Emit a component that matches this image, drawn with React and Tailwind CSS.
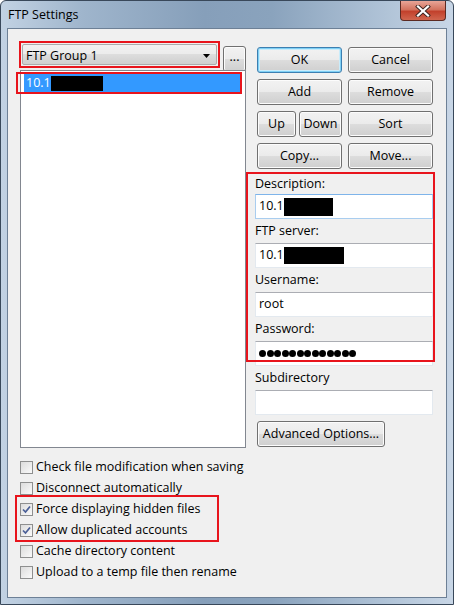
import React from 'react';

const font = { fontFamily: '"Open Sans", "Liberation Sans", sans-serif' };

const Btn = ({ children, className = '', def = false }) => (
  <div
    className={`flex items-center justify-center h-[26px] rounded-[3px] border text-[12.5px] text-black bg-[linear-gradient(#f2f2f2_0%,#ebebeb_50%,#dddddd_50%,#cfcfcf_100%)] ${
      def
        ? 'border-[#3c7fb1] shadow-[inset_0_0_0_1px_#7fd0f5,inset_0_0_0_2px_#c9ecfb]'
        : 'border-[#707070] shadow-[inset_0_0_0_1px_#fcfcfc]'
    } ${className}`}
  >
    {children}
  </div>
);

const Field = ({ label, labelH = 'h-[24px]', focus = false, children }) => (
  <div className="-ml-[2px]">
    <div className={`${labelH} flex items-center text-[12.5px] text-black`}>{label}</div>
    <div
      className={`h-[25px] w-[178px] bg-white border flex items-center pl-[3px] text-[12.5px] text-black ${
        focus ? 'border-[#a9cdef] border-t-[#7eb4ea]' : 'border-[#e3e9ef] border-t-[#abadb3]'
      }`}
    >
      {children}
    </div>
  </div>
);

const Check = ({ label, checked }) => (
  <div className="h-[21px] flex items-center">
    <div className="w-[13px] h-[13px] border border-[#8e8f8f] bg-[linear-gradient(135deg,#dcdcdc,#fafafa)] p-[1px] flex items-center justify-center">
      {checked && (
        <svg width="9" height="9" viewBox="0 0 9 9">
          <path d="M1 4.5 L3.5 7 L8 1.5" stroke="#4a5f97" strokeWidth="1.7" fill="none" />
        </svg>
      )}
    </div>
    <span className="ml-[3px] text-[12.5px] text-black">{label}</span>
  </div>
);

const Redact = ({ w, h = 'h-[16px]' }) => <span className={`inline-block bg-black ${h}`} style={{ width: w }} />;

export default function App() {
  return (
    <div
      style={font}
      className="relative w-[454px] h-[605px] rounded-t-[6px] border border-[#39485a] bg-[linear-gradient(90deg,#c2d2e3_0%,#9fb5cc_18%,#869fba_45%,#8aa3bd_60%,#b0c3d7_85%,#c8d6e6_100%)] overflow-hidden"
    >
      {/* Title bar */}
      <div className="h-[27px] flex items-center pl-[7px] pt-[2px] text-[12.5px] text-black">FTP Settings</div>
      <div className="absolute top-0 right-[7px] w-[46px] h-[20px] rounded-b-[4px] border border-t-0 border-[#5b2a22] bg-[linear-gradient(#e8a597_0%,#d3735f_45%,#c2412c_55%,#d0664f_100%)] flex items-center justify-center">
        <svg width="16" height="12" viewBox="0 0 16 12">
          <path d="M3 1.5 L13 10.5 M13 1.5 L3 10.5" stroke="#3b2420" strokeWidth="4" strokeLinecap="square" />
          <path d="M3 1.5 L13 10.5 M13 1.5 L3 10.5" stroke="#ffffff" strokeWidth="2.2" strokeLinecap="square" />
        </svg>
      </div>

      {/* Client area */}
      <div className="relative mx-[6px] h-[570px] border border-[#6d8096] bg-[#f0f0f0] pl-[12px] pt-[12px]">
        <div className="flex gap-[11px]">
          {/* Left column */}
          <div className="w-[226px]">
            <div className="h-[29px] flex items-start">
              <div className="-ml-px w-[201px] h-[27px] border-2 border-[#e8141c] p-px">
                <div className="h-full border border-[#acacac] rounded-[2px] bg-[linear-gradient(#f2f2f2_0%,#ebebeb_50%,#dddddd_50%,#cfcfcf_100%)] flex items-center justify-between pl-[3px] pr-[6px] pt-[3px] text-[12.5px] text-black">
                  <span>FTP Group 1</span>
                  <svg width="7" height="4" viewBox="0 0 7 4">
                    <path d="M0 0 H7 L3.5 4 Z" fill="#000" />
                  </svg>
                </div>
              </div>
              <Btn className="ml-[3px] mt-[5px] w-[23px] h-[24px] pb-[4px]">...</Btn>
            </div>
            <div className="relative h-[378px] bg-white border border-[#828790] p-[3px] pt-[3px]">
              <div className="h-[18px] bg-[#3399ff] flex items-center pl-[2px] text-[12.5px] text-white">
                10.1<Redact w="52px" h="h-[15px]" />
              </div>
              <div className="absolute left-[-5px] top-[1px] w-[226px] h-[22px] border-2 border-[#e8141c] pointer-events-none" />
            </div>
          </div>

          {/* Right column */}
          <div className="w-[178px] pt-[6px]">
            <div className="grid grid-cols-2 gap-[6px] w-[176px]">
              <Btn def>OK</Btn>
              <Btn>Cancel</Btn>
              <Btn>Add</Btn>
              <Btn>Remove</Btn>
              <div className="flex gap-[3px]">
                <Btn className="w-[39px]">Up</Btn>
                <Btn className="flex-1">Down</Btn>
              </div>
              <Btn>Sort</Btn>
              <Btn>Copy...</Btn>
              <Btn>Move...</Btn>
            </div>

            <div className="relative mt-[3px] pt-[2px]">
              <Field label="Description:" labelH="h-[20px]" focus>
                10.1<Redact w="49px" h="h-[18px]" />
              </Field>
              <Field label="FTP server:">
                10.1<Redact w="60px" h="h-[17px]" />
              </Field>
              <Field label="Username:">root</Field>
              <Field label="Password:">
                <span className="flex gap-[0.5px]">
                  {Array.from({ length: 13 }).map((_, i) => (
                    <span key={i} className="w-[7px] h-[7px] rounded-full bg-black" />
                  ))}
                </span>
              </Field>
              <div className="absolute left-[-11px] top-0 w-[189px] h-[190px] border-2 border-[#e8141c] pointer-events-none" />
            </div>

            <Field label="Subdirectory" />
            <Btn className="mt-[6px] w-[128px]">Advanced Options...</Btn>
          </div>
        </div>

        {/* Checkboxes */}
        <div className="relative mt-[9px]">
          <Check label="Check file modification when saving" />
          <Check label="Disconnect automatically" />
          <Check label="Force displaying hidden files" checked />
          <Check label="Allow duplicated accounts" checked />
          <Check label="Cache directory content" />
          <Check label="Upload to a temp file then rename" />
          <div className="absolute left-[-5px] top-[38px] w-[204px] h-[47px] border-2 border-[#e8141c] pointer-events-none" />
        </div>
      </div>
    </div>
  );
}
